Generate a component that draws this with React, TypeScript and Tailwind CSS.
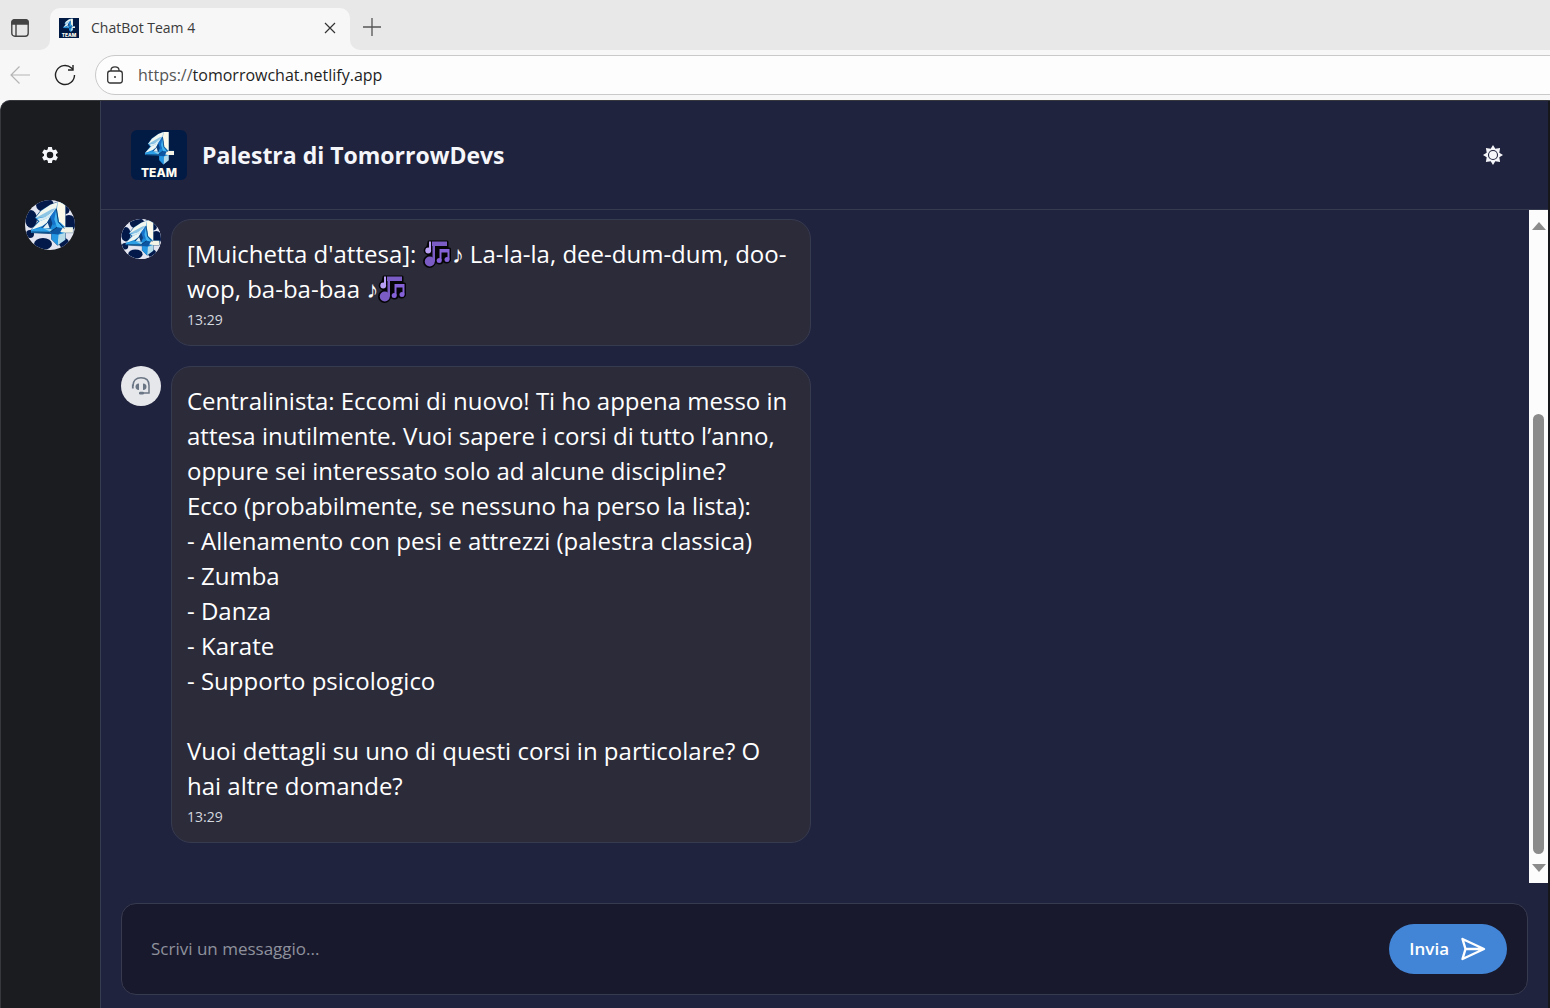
import type { ReactNode } from "react";

const FONT = "font-['Segoe_UI','Open_Sans','Noto_Sans',sans-serif]";

function FourShape() {
  return (
    <g>
      <path
        d="M80 0H103V75H126V92H103V113L80 130L62 112V95L0 92V84L22 58L12 48L30 25L58 8Z"
        fill="#1b8ad8"
        stroke="#0a2f5e"
        strokeWidth="2"
      />
      <path d="M80 0H103V76L84 58L78 22Z" fill="#fbf9ea" />
      <path d="M80 0L58 8L30 27L13 48L42 43L76 20Z" fill="#f1f6ef" />
      <path d="M76 18L62 22L36 36L13 48L42 45Z" fill="#8cc4e4" />
      <path d="M76 20L42 45L18 50L26 58L56 46Z" fill="#d5ebf3" />
      <path d="M58 44L26 58L0 84L34 72L48 62Z" fill="#eef6f3" />
      <path d="M58 44L48 62L30 78L58 80L68 58Z" fill="#0b3f7d" />
      <path d="M50 62L36 78L56 79Z" fill="#e4f2f6" />
      <path d="M74 20L58 44L66 70L80 64L80 40Z" fill="#1672c8" />
      <path d="M76 22L82 60L96 78L78 76L70 52Z" fill="#43b4f2" />
      <path d="M0 84L34 77L62 82L56 90L0 92Z" fill="#2c9fe6" />
      <path d="M34 77L62 82L60 90Z" fill="#8fd0ee" />
      <path d="M58 90L78 76L100 80L82 98L62 95Z" fill="#0d56a2" />
      <path d="M96 76H126V92H103L88 90Z" fill="#f4f4e6" />
      <path d="M82 98L103 92V113L80 130Z" fill="#b5dbe8" />
      <path d="M62 96L82 98L80 130L62 112Z" fill="#2496e2" />
      <path d="M76 20L82 60L100 80M1 90L56 91L78 76" fill="none" stroke="#08315f" strokeWidth="2.500" />
    </g>
  );
}

function TeamLogo({ className }: { className: string }) {
  return (
    <svg viewBox="0 0 56 50" className={className} role="img" aria-label="4 Team" preserveAspectRatio="xMidYMid slice">
      <rect width="56" height="50" fill="#021b45" />
      <g transform="translate(14 2) scale(.23 .25)">
        <FourShape />
      </g>
      <text x="28" y="46.500" textAnchor="middle" fill="#fffdf2" fontSize="12" fontWeight="800" fontFamily="Inter, sans-serif">
        TEAM
      </text>
    </svg>
  );
}

function RoundLogo({ className }: { className: string }) {
  return (
    <svg viewBox="0 0 50 50" className={className} role="img" aria-label="Logo">
      <rect width="50" height="50" fill="#e3e6f0" />
      <g fill="#03194a">
        <ellipse cx="20" cy="5" rx="9" ry="7" />
        <ellipse cx="6" cy="19" rx="6" ry="9" />
        <ellipse cx="5" cy="34" rx="4" ry="4" />
        <ellipse cx="18" cy="44" rx="9" ry="6" />
        <ellipse cx="39" cy="43" rx="5" ry="5" />
        <ellipse cx="44" cy="23" rx="7" ry="8" />
        <ellipse cx="41" cy="8" rx="4" ry="6" />
      </g>
      <g transform="translate(6 2) scale(.333)">
        <FourShape />
      </g>
    </svg>
  );
}

function GearIcon() {
  return (
    <svg viewBox="0 0 24 24" className="size-5" fill="#f5f6fa" aria-hidden="true">
      <path d="M19.140 12.940c.04-.3.06-.61.06-.94 0-.32-.02-.64-.07-.94l2.030-1.580a.49.49 0 0 0 .12-.61l-1.920-3.320a.49.49 0 0 0-.59-.22l-2.390.96c-.5-.38-1.030-.7-1.620-.94l-.36-2.540a.48.48 0 0 0-.48-.41h-3.840a.47.47 0 0 0-.47.41l-.36 2.540c-.59.24-1.130.57-1.620.94l-2.390-.96a.48.48 0 0 0-.59.22L2.740 8.870a.47.47 0 0 0 .12.61l2.030 1.580c-.05.3-.09.63-.09.94s.02.64.07.94l-2.030 1.580a.49.49 0 0 0-.12.61l1.920 3.320c.12.22.37.29.59.22l2.390-.96c.5.38 1.030.7 1.620.94l.36 2.540c.05.24.24.41.48.41h3.840c.24 0 .44-.17.47-.41l.36-2.540c.59-.24 1.130-.56 1.620-.94l2.390.96c.22.08.47 0 .59-.22l1.920-3.320a.47.47 0 0 0-.12-.61zM12 15.900a3.900 3.900 0 1 1 0-7.800 3.900 3.900 0 0 1 0 7.800" />
    </svg>
  );
}

function SunIcon() {
  return (
    <svg viewBox="0 0 20 20" className="size-5" aria-hidden="true">
      <path
        d="M10 0L12.300 3.700L17.100 2.900L16.300 7.700L20 10L16.300 12.300L17.100 17.100L12.300 16.300L10 20L7.700 16.300L2.900 17.100L3.700 12.300L0 10L3.700 7.700L2.900 2.900L7.700 3.700Z"
        fill="#f5f6fa"
      />
      <circle cx="10" cy="10" r="4.500" fill="#f5f6fa" stroke="#20233d" strokeWidth="1.100" />
    </svg>
  );
}

function HeadsetIcon() {
  return (
    <svg viewBox="0 0 20 20" className="size-5" fill="none" stroke="#6b7685" aria-hidden="true">
      <path d="M2 10V9.500C2 4.500 5.200 1.800 10 1.800s8 2.700 8 7.700V17h-7" strokeWidth="1.500" />
      <path d="M1.800 8.500v4" strokeWidth="1.800" />
      <path d="M8 7.500v6.500C5.500 14 4.500 12.800 4.500 10.800S5.500 7.500 8 7.500Z" fill="#6b7685" stroke="none" />
      <path d="M12 7.500v6.500C14.500 14 15.500 12.800 15.500 10.800S14.500 7.500 12 7.500Z" fill="#6b7685" stroke="none" />
      <rect x="8" y="15.700" width="5" height="2.800" rx="1.200" fill="#6b7685" stroke="none" />
    </svg>
  );
}

function SendIcon() {
  return (
    <svg viewBox="0 0 26 26" className="size-[26px]" fill="none" stroke="white" strokeWidth="2.400" strokeLinecap="round" strokeLinejoin="round" aria-hidden="true">
      <path d="M2.500 3L24 13L2.500 23L5.500 13ZM5.500 13H23" />
    </svg>
  );
}

function MusicNotes() {
  return (
    <svg viewBox="0 0 29 29" className="inline-block size-[29px] align-[-6px]" role="img" aria-label="🎶">
      <g stroke="#050507" strokeWidth="3" strokeLinejoin="round" fill="#050507">
        <path d="M6 2H24V9H26.500V20H24L17 21L12 22H9L4 11Z" />
        <circle cx="6.500" cy="21.500" r="5" />
        <circle cx="5" cy="10.500" r="2.800" />
        <circle cx="16.500" cy="20.500" r="2.500" />
        <circle cx="23.500" cy="19.500" r="2.500" />
      </g>
      <path d="M9 1.500H24V6H12V21.500H9.500V6H9Z" fill="#7a5cc4" />
      <path d="M6 1.500H8V10.500H6Z" fill="#b9a0f4" />
      <circle cx="5.200" cy="10.500" r="2.900" fill="#b9a0f4" />
      <circle cx="6.800" cy="21.500" r="5" fill="#7a5cc4" />
      <path d="M16.500 9H26.500V19.500H24.500V12.500H18.500V20.500H16.500Z" fill="#8562d8" />
      <circle cx="16.200" cy="20.500" r="2.500" fill="#8562d8" />
      <circle cx="24" cy="19.500" r="2.500" fill="#8562d8" />
    </svg>
  );
}

function Message({ avatar, time, children }: { avatar: ReactNode; time: string; children: ReactNode }) {
  return (
    <article className="flex items-start gap-[10px]">
      <div className="flex size-10 shrink-0 items-center justify-center overflow-hidden rounded-full bg-[#e5e7eb]">{avatar}</div>
      <div className="w-full max-w-[640px] rounded-[20px] border border-[#373b50] bg-[#2b2b3a] px-[15px] pt-4 pb-[11px] text-white">
        <p className="text-[24px] leading-[35px] whitespace-pre-line">{children}</p>
        <time className="block text-[14px] leading-7 text-[#d5d8df]">{time}</time>
      </div>
    </article>
  );
}

function BrowserChrome() {
  return (
    <header className="shrink-0 bg-[#f7f7f7] text-[#3b3b3b]">
      <div className="flex h-[50px] bg-[#f7f7f7]">
        <div className="flex w-[50px] items-center rounded-br-[10px] bg-[#e8e8e8] pt-[6px] pl-[11px]">
          <button type="button" aria-label="Schede verticali">
            <svg viewBox="0 0 18 18" className="size-[18px]" fill="none" stroke="#444" strokeWidth="1.400" aria-hidden="true">
              <rect x=".8" y=".8" width="16.400" height="16.400" rx="3" />
              <path d="M1 3Q1 1 3 1H15Q17 1 17 3V5H1Z" fill="#444" />
              <path d="M5 5V17" />
            </svg>
          </button>
        </div>
        <div className="flex w-[300px] bg-[#e8e8e8]">
          <div className="mt-2 flex w-full items-center rounded-t-[10px] bg-[#f7f7f7] pr-[14px] pb-[2px] pl-[9px]">
            <TeamLogo className="size-5" />
            <span className="ml-3 flex-1 text-[14px] leading-5">ChatBot Team 4</span>
            <button type="button" aria-label="Chiudi scheda">
              <svg viewBox="0 0 12 12" className="size-3" stroke="#333" strokeWidth="1.200" aria-hidden="true">
                <path d="M1 1L11 11M11 1L1 11" />
              </svg>
            </button>
          </div>
        </div>
        <div className="flex flex-1 items-center rounded-bl-[10px] bg-[#e8e8e8] pt-1 pl-[13px]">
          <button type="button" aria-label="Nuova scheda">
            <svg viewBox="0 0 18 18" className="size-[18px]" stroke="#555" strokeWidth="1.300" aria-hidden="true">
              <path d="M9 0V18M0 9H18" />
            </svg>
          </button>
        </div>
      </div>
      <div className="flex h-[50px] items-center overflow-hidden pl-[10px]">
        <button type="button" aria-label="Indietro" className="mr-6">
          <svg viewBox="0 0 20 20" className="size-5" fill="none" stroke="#b5b5b5" strokeWidth="1.200" aria-hidden="true">
            <path d="M20 10H1M9.500 1.500L1 10L9.500 18.500" />
          </svg>
        </button>
        <button type="button" aria-label="Aggiorna" className="mr-[19px]">
          <svg viewBox="0 0 22 22" className="size-[22px]" fill="none" stroke="#222" strokeWidth="1.400" aria-hidden="true">
            <path d="M20.500 11A9.500 9.500 0 1 1 17.500 4.100L19 5.600" />
            <path d="M19 1V6H14" />
          </svg>
        </button>
        <div className="-mr-5 flex h-10 flex-1 items-center rounded-full border border-[#c9c9c9] bg-[#fdfdfd] pl-[11px]">
          <svg viewBox="0 0 16 18" className="h-[18px] w-4" fill="none" stroke="#333" strokeWidth="1.300" aria-hidden="true">
            <rect x=".7" y="5" width="14.600" height="12" rx="2.500" />
            <path d="M4 5V4C4 2 5.500 .8 8 .8S12 2 12 4V5" />
            <circle cx="8" cy="11" r="1" fill="#333" stroke="none" />
          </svg>
          <a href="https://tomorrowchat.netlify.app" className="ml-[15px] text-[16px] leading-6 text-[#1f1f1f]">
            <span className="text-[#555]">https://</span>tomorrowchat.netlify.app
          </a>
        </div>
      </div>
    </header>
  );
}

function ScrollTrack() {
  return (
    <div className="flex w-[19px] shrink-0 flex-col items-center bg-[#fcfcfc] pt-3 pb-[11px]" aria-hidden="true">
      <svg viewBox="0 0 14 8" className="h-2 w-[14px] shrink-0" fill="#8b8b8b">
        <path d="M7 0L14 8H0Z" />
      </svg>
      <div className="flex min-h-0 w-full flex-1 flex-col items-center pt-[184px] pb-[10px]">
        <div className="w-[11px] flex-1 rounded-full bg-[#8b8b8b]" />
      </div>
      <svg viewBox="0 0 14 8" className="h-2 w-[14px] shrink-0" fill="#8b8b8b">
        <path d="M0 0H14L7 8Z" />
      </svg>
    </div>
  );
}

const operatorReply = `Centralinista: Eccomi di nuovo! Ti ho appena messo in attesa inutilmente. Vuoi sapere i corsi di tutto l’anno, oppure sei interessato solo ad alcune discipline?
Ecco (probabilmente, se nessuno ha perso la lista):
- Allenamento con pesi e attrezzi (palestra classica)
- Zumba
- Danza
- Karate
- Supporto psicologico

Vuoi dettagli su uno di questi corsi in particolare? O hai altre domande?`;

export default function App() {
  return (
    <div className={`flex h-screen flex-col overflow-hidden bg-[#f7f7f7] ${FONT}`}>
      <BrowserChrome />
      <div className="flex min-h-0 flex-1 overflow-hidden rounded-tl-[10px] border-t border-l border-[#36383d] border-r-2 border-r-[#15171a] bg-[#20233d]">
        <aside className="flex w-[100px] shrink-0 flex-col items-center border-r border-[#373d50] bg-[#1b1c1f] pt-11 pr-px">
          <button type="button" aria-label="Impostazioni">
            <GearIcon />
          </button>
          <button type="button" aria-label="Chatbot" className="mt-[35px] overflow-hidden rounded-full">
            <RoundLogo className="size-[50px]" />
          </button>
        </aside>
        <main className="flex min-w-0 flex-1 flex-col">
          <div className="flex h-[109px] shrink-0 items-center border-b border-[#373b50] pr-[45px] pl-[30px]">
            <TeamLogo className="h-[50px] w-14 rounded-md" />
            <h1 className="ml-[15px] flex-1 text-[23px] leading-8 font-bold text-[#f5f6fa]">Palestra di TomorrowDevs</h1>
            <button type="button" aria-label="Tema chiaro">
              <SunIcon />
            </button>
          </div>
          <div className="flex min-h-0 flex-1">
            <section aria-label="Messaggi" className="flex min-w-0 flex-1 flex-col gap-5 overflow-hidden px-5 pt-[9px]">
              <Message avatar={<RoundLogo className="size-10" />} time="13:29">
                <span>[Muichetta d'attesa]: </span>
                <MusicNotes />
                <span className="font-bold">♪</span>
                <span> La-la-la, dee-dum-dum, doo-</span>
                <span>wop, ba-ba-baa </span>
                <span className="font-bold">♪</span>
                <MusicNotes />
              </Message>
              <Message avatar={<HeadsetIcon />} time="13:29">
                {operatorReply}
              </Message>
            </section>
            <ScrollTrack />
          </div>
          <form
            className="mx-5 mt-5 mb-[13px] flex h-[92px] shrink-0 items-center rounded-[15px] border border-[#373b50] bg-[#19192d] pr-5 pl-[29px]"
            onSubmit={(event) => event.preventDefault()}
          >
            <input
              type="text"
              aria-label="Scrivi un messaggio"
              placeholder="Scrivi un messaggio..."
              className="min-w-0 flex-1 bg-transparent text-[17px] leading-6 text-white outline-none placeholder:text-[#8e919c]"
            />
            <button type="submit" className="flex h-[50px] items-center gap-[11px] rounded-full bg-[#4285d6] pr-[21px] pl-5 text-[17px] leading-6 font-semibold text-white">
              Invia
              <SendIcon />
            </button>
          </form>
        </main>
      </div>
    </div>
  );
}
